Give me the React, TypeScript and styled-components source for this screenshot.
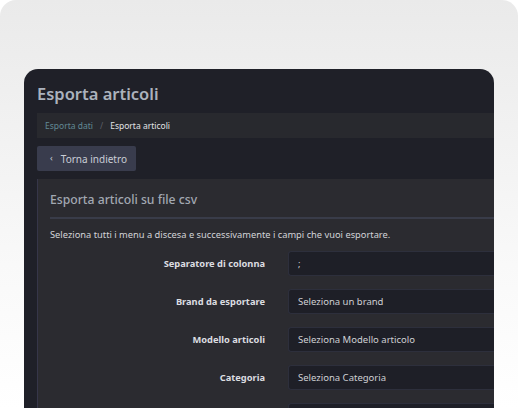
import { Fragment } from "react";
import styled, { createGlobalStyle } from "styled-components";

const GlobalStyle = createGlobalStyle`
  html, body {
    margin: 0;
    padding: 0;
    background: #ffffff;
  }
  body {
    font-family: "Noto Sans", "Liberation Sans", sans-serif;
  }
`;

const Backdrop = styled.div`
  width: 518px;
  height: 408px;
  overflow: hidden;
  border-radius: 16px 16px 0 0;
  background: linear-gradient(180deg, #eaeaea 0%, #f2f2f2 35%, #f9f9f9 65%, #ffffff 100%);
  padding: 69px 0 0 24px;
  box-sizing: border-box;
`;

const Window = styled.div`
  width: 470px;
  height: 339px;
  overflow: hidden;
  background: #1f2028;
  border-radius: 14px 14px 0 0;
  padding: 11px 0 0 13px;
  box-sizing: border-box;
  display: flex;
  flex-direction: column;

  > * {
    flex-shrink: 0;
  }
`;

const PageTitle = styled.h1`
  margin: 0;
  font-size: 16.5px;
  line-height: 28px;
  font-weight: 600;
  color: #abb2bd;
`;

const Breadcrumb = styled.nav`
  margin-top: 5px;
  height: 25px;
  background: #28292e;
  display: flex;
  align-items: center;
  gap: 7px;
  padding-left: 8px;
  font-size: 8.5px;
`;

const Crumb = styled.span<{ $active?: boolean }>`
  color: ${(p) => (p.$active ? "#e2e3e6" : "#628a95")};
`;

const Sep = styled.span`
  color: #5d5f68;
`;

const BackButton = styled.button`
  margin-top: 8px;
  align-self: flex-start;
  width: 99px;
  height: 25px;
  border: none;
  border-radius: 2px;
  background: #393c4d;
  color: #c9cdd6;
  font-family: inherit;
  font-size: 10px;
  display: flex;
  align-items: center;
  gap: 8px;
  padding: 0 0 0 13px;
`;

const Chevron = styled.span`
  font-size: 9px;
  margin-top: -2px;
`;

const Card = styled.section`
  margin-top: 8px;
  flex: 1 0 auto;
  background: #2b2b30;
  border-left: 1px solid #363649;
  padding: 12px 0 0 12px;
`;

const CardTitle = styled.h2`
  margin: 0;
  font-size: 12.2px;
  line-height: 18px;
  font-weight: 500;
  color: #a2a8b2;
  padding-bottom: 8px;
  border-bottom: 2px solid #393c49;
`;

const Description = styled.p`
  margin: 9px 0 0;
  font-size: 9.3px;
  line-height: 14px;
  color: #d3d4d8;
`;

const Form = styled.div`
  margin-top: 9px;
  display: grid;
  grid-template-columns: 215px 1fr;
  column-gap: 23px;
  row-gap: 13px;
  align-items: center;
`;

const Label = styled.label`
  text-align: right;
  font-size: 9.3px;
  font-weight: 700;
  color: #dcdde0;
`;

const Field = styled.div`
  height: 25px;
  box-sizing: border-box;
  background: #1e1f27;
  border: 1px solid #2d2f3c;
  border-right: none;
  border-radius: 3px 0 0 3px;
  display: flex;
  align-items: center;
  padding-left: 9px;
  font-size: 9.5px;
  color: #cfd0d4;
`;

const rows = [
  { label: "Separatore di colonna", value: ";" },
  { label: "Brand da esportare", value: "Seleziona un brand" },
  { label: "Modello articoli", value: "Seleziona Modello articolo" },
  { label: "Categoria", value: "Seleziona Categoria" },
  { label: "", value: "" },
];

export default function App() {
  return (
    <>
      <GlobalStyle />
      <Backdrop>
        <Window>
          <PageTitle>Esporta articoli</PageTitle>
          <Breadcrumb>
            <Crumb>Esporta dati</Crumb>
            <Sep>/</Sep>
            <Crumb $active>Esporta articoli</Crumb>
          </Breadcrumb>
          <BackButton>
            <Chevron>‹</Chevron>
            <span>Torna indietro</span>
          </BackButton>
          <Card>
            <CardTitle>Esporta articoli su file csv</CardTitle>
            <Description>
              Seleziona tutti i menu a discesa e successivamente i campi che vuoi esportare.
            </Description>
            <Form>
              {rows.map((r, i) => (
                <Fragment key={i}>
                  <Label>{r.label}</Label>
                  <Field>{r.value}</Field>
                </Fragment>
              ))}
            </Form>
          </Card>
        </Window>
      </Backdrop>
    </>
  );
}
